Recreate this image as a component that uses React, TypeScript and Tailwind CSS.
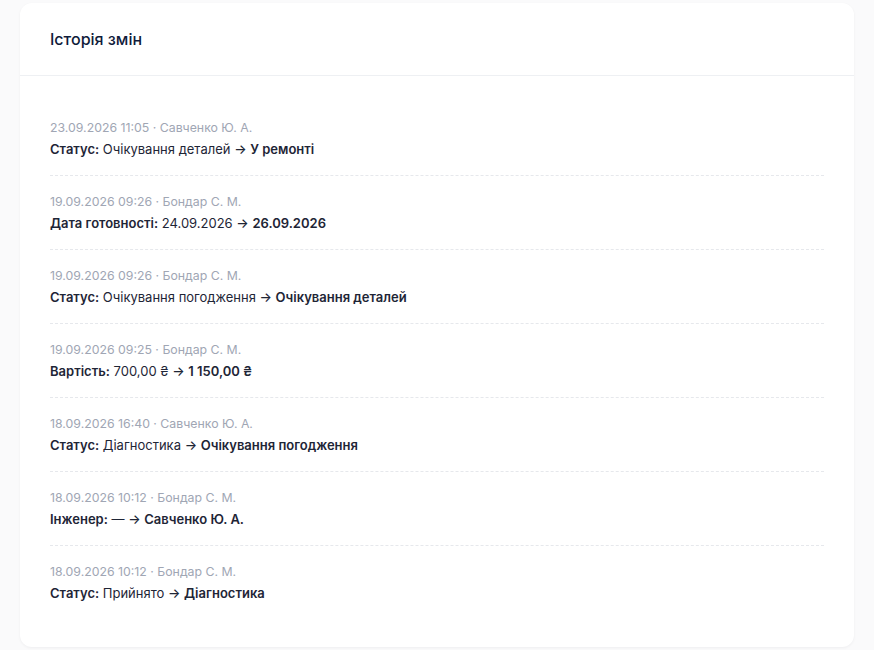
type Change = {
  at: string;
  author: string;
  field: string;
  from: string;
  to: string;
};

const changes: Change[] = [
  { at: "23.09.2026 11:05", author: "Савченко Ю. А.", field: "Статус", from: "Очікування деталей", to: "У ремонті" },
  { at: "19.09.2026 09:26", author: "Бондар С. М.", field: "Дата готовності", from: "24.09.2026", to: "26.09.2026" },
  { at: "19.09.2026 09:26", author: "Бондар С. М.", field: "Статус", from: "Очікування погодження", to: "Очікування деталей" },
  { at: "19.09.2026 09:25", author: "Бондар С. М.", field: "Вартість", from: "700,00 ₴", to: "1 150,00 ₴" },
  { at: "18.09.2026 16:40", author: "Савченко Ю. А.", field: "Статус", from: "Діагностика", to: "Очікування погодження" },
  { at: "18.09.2026 10:12", author: "Бондар С. М.", field: "Інженер", from: "—", to: "Савченко Ю. А." },
  { at: "18.09.2026 10:12", author: "Бондар С. М.", field: "Статус", from: "Прийнято", to: "Діагностика" },
];

export default function App() {
  return (
    <div
      className="min-h-screen bg-[#fafafb] px-5 pt-[3px] pb-1"
      style={{ fontFamily: "Inter, 'Noto Sans', sans-serif" }}
    >
      <div className="rounded-xl bg-white shadow-[0_1px_3px_rgba(15,23,42,0.05)]">
        {/* Header */}
        <div className="border-b border-[#eef0f3] px-[30px] py-6">
          <h2 className="text-base leading-6 font-medium text-[#0f1b3a]">Історія змін</h2>
        </div>

        {/* Entries */}
        <div className="px-[30px] pt-[26px] pb-[28px]">
          {changes.map((c, i) => (
            <div
              key={i}
              className={
                "py-4 " +
                (i < changes.length - 1 ? "border-b border-dashed border-[#e6e8ec]" : "")
              }
            >
              <div className="text-[12.3px] leading-5 text-[#a0a6b4]">
                {c.at} · {c.author}
              </div>
              <div className="mt-px text-[13px] leading-5 text-[#1e2536]">
                <span className="font-semibold">{c.field}:</span> {c.from}{" "}
                <span className="font-medium">→</span>{" "}
                <span className="font-semibold">{c.to}</span>
              </div>
            </div>
          ))}
        </div>
      </div>
    </div>
  );
}
